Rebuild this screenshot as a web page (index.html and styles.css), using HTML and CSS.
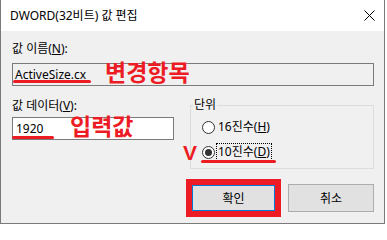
FILE: index.html
```html
<!DOCTYPE html>
<html lang="ko">
<head>
<meta charset="utf-8">
<title>DWORD(32비트) 값 편집</title>
<link rel="stylesheet" href="styles.css">
</head>
<body>
<div class="window">
  <header class="titlebar">
    <span class="title">DWORD(32비트) 값 편집</span>
    <svg class="close" width="11" height="11" viewBox="0 0 11 11"><path d="M0.5 0.5 L10.5 10.5 M10.5 0.5 L0.5 10.5" stroke="#000" stroke-width="1" fill="none"/></svg>
  </header>
  <main class="body">
    <div class="lbl">값 이름(<u>N</u>):</div>
    <div class="field field-name">
      <span>ActiveSize.cx</span>
      <span class="mark mark-name"></span>
      <span class="note note-name">변경항목</span>
    </div>
    <div class="lower">
      <div class="data-col">
        <div class="lbl">값 데이터(<u>V</u>):</div>
        <div class="field field-data">
          <span>1920</span>
          <span class="mark mark-data"></span>
          <span class="note note-data">입력값</span>
        </div>
      </div>
      <fieldset class="base">
        <legend>단위</legend>
        <div class="radio-row"><span class="radio"></span><span class="rlabel">16진수(<u>H</u>)</span></div>
        <div class="radio-row"><span class="vmark">V</span><span class="radio checked"></span><span class="rlabel focus">10진수(<u>D</u>)</span><span class="mark mark-radio"></span></div>
      </fieldset>
    </div>
    <div class="buttons">
      <button class="btn btn-ok">확인</button>
      <button class="btn">취소</button>
    </div>
  </main>
</div>
</body>
</html>
```
FILE: styles.css
```css
html, body { margin: 0; }
body {
  width: 387px;
  height: 225px;
  background: #fff;
  font-family: "Noto Sans", "Noto Sans CJK KR", sans-serif;
  font-size: 12px;
  color: #000;
}
.window {
  width: 383px;
  height: 223px;
  border: 1px solid #7a7a7a;
  border-top: none;
  display: flex;
  flex-direction: column;
  background: #f0f0f0;
}
.titlebar {
  height: 31px;
  flex: none;
  background: #fff;
  display: flex;
  align-items: center;
  justify-content: space-between;
  padding: 0 9px 0 9px;
  box-sizing: border-box;
}
.title { font-size: 12px; line-height: 16px; }
.close { display: block; }
.body {
  flex: 1;
  padding: 10px 10px 0 11px;
}
.lbl { line-height: 16px; }
.field {
  position: relative;
  box-sizing: border-box;
  height: 23px;
  border: 1px solid #7a7a7a;
  padding: 0 2px;
  line-height: 21px;
}
.field-name { margin-top: 6px; background: #f0f0f0; }
.field-data { margin-top: 3px; background: #fff; padding-left: 3px; }
.mark {
  position: absolute;
  height: 3px;
  background: #ed1c24;
  border-radius: 2px;
}
.mark-name { left: 0; top: 16px; width: 78px; }
.mark-data { left: -1px; top: 18px; width: 42px; }
.note {
  position: absolute;
  color: #ed1c24;
  font-family: "Noto Sans CJK KR", sans-serif;
  font-weight: 700;
  font-size: 23px;
  line-height: 20px;
  white-space: nowrap;
}
.note-name { left: 92px; top: -3px; }
.note-data { left: 57px; top: -3px; }
.lower {
  display: grid;
  grid-template-columns: 162px 184px;
  column-gap: 16px;
  margin-top: 12px;
  align-items: start;
}
.base {
  margin: 0;
  min-width: 0;
  padding: 6px 0 7px 11px;
  border: 1px solid #dcdcdc;
  display: flex;
  flex-direction: column;
  gap: 7px;
}
.base legend {
  padding: 0 1px;
  margin-left: -9px;
  line-height: 14px;
}
.radio-row {
  position: relative;
  display: flex;
  align-items: center;
  height: 18px;
}
.radio {
  width: 13px;
  height: 13px;
  box-sizing: border-box;
  border: 1px solid #333;
  border-radius: 50%;
  background: #fff;
  margin-right: 2px;
  display: flex;
  align-items: center;
  justify-content: center;
}
.radio.checked::after {
  content: "";
  width: 7px;
  height: 7px;
  border-radius: 50%;
  background: #333;
}
.rlabel { padding: 0 1px; line-height: 16px; }
.rlabel.focus { outline: 1px dotted #000; }
.mark-radio { left: -1px; top: 17px; width: 75px; }
.vmark {
  position: absolute;
  left: -19px;
  top: -1px;
  color: #ed1c24;
  font-family: "Liberation Sans", sans-serif;
  font-weight: 700;
  font-size: 21px;
  line-height: 21px;
}
.buttons {
  display: flex;
  justify-content: flex-end;
  gap: 12px;
  margin-top: 15px;
}
.btn {
  width: 86px;
  height: 28px;
  box-sizing: border-box;
  border: 1px solid #adadad;
  background: #e1e1e1;
  font: inherit;
  color: #000;
  padding: 0;
}
.btn-ok {
  width: 85px;
  border-color: #0078d7;
  box-shadow: inset 0 0 0 1px #0078d7;
  outline: 6px solid #ed1c24;
  outline-offset: -1px;
}
```
